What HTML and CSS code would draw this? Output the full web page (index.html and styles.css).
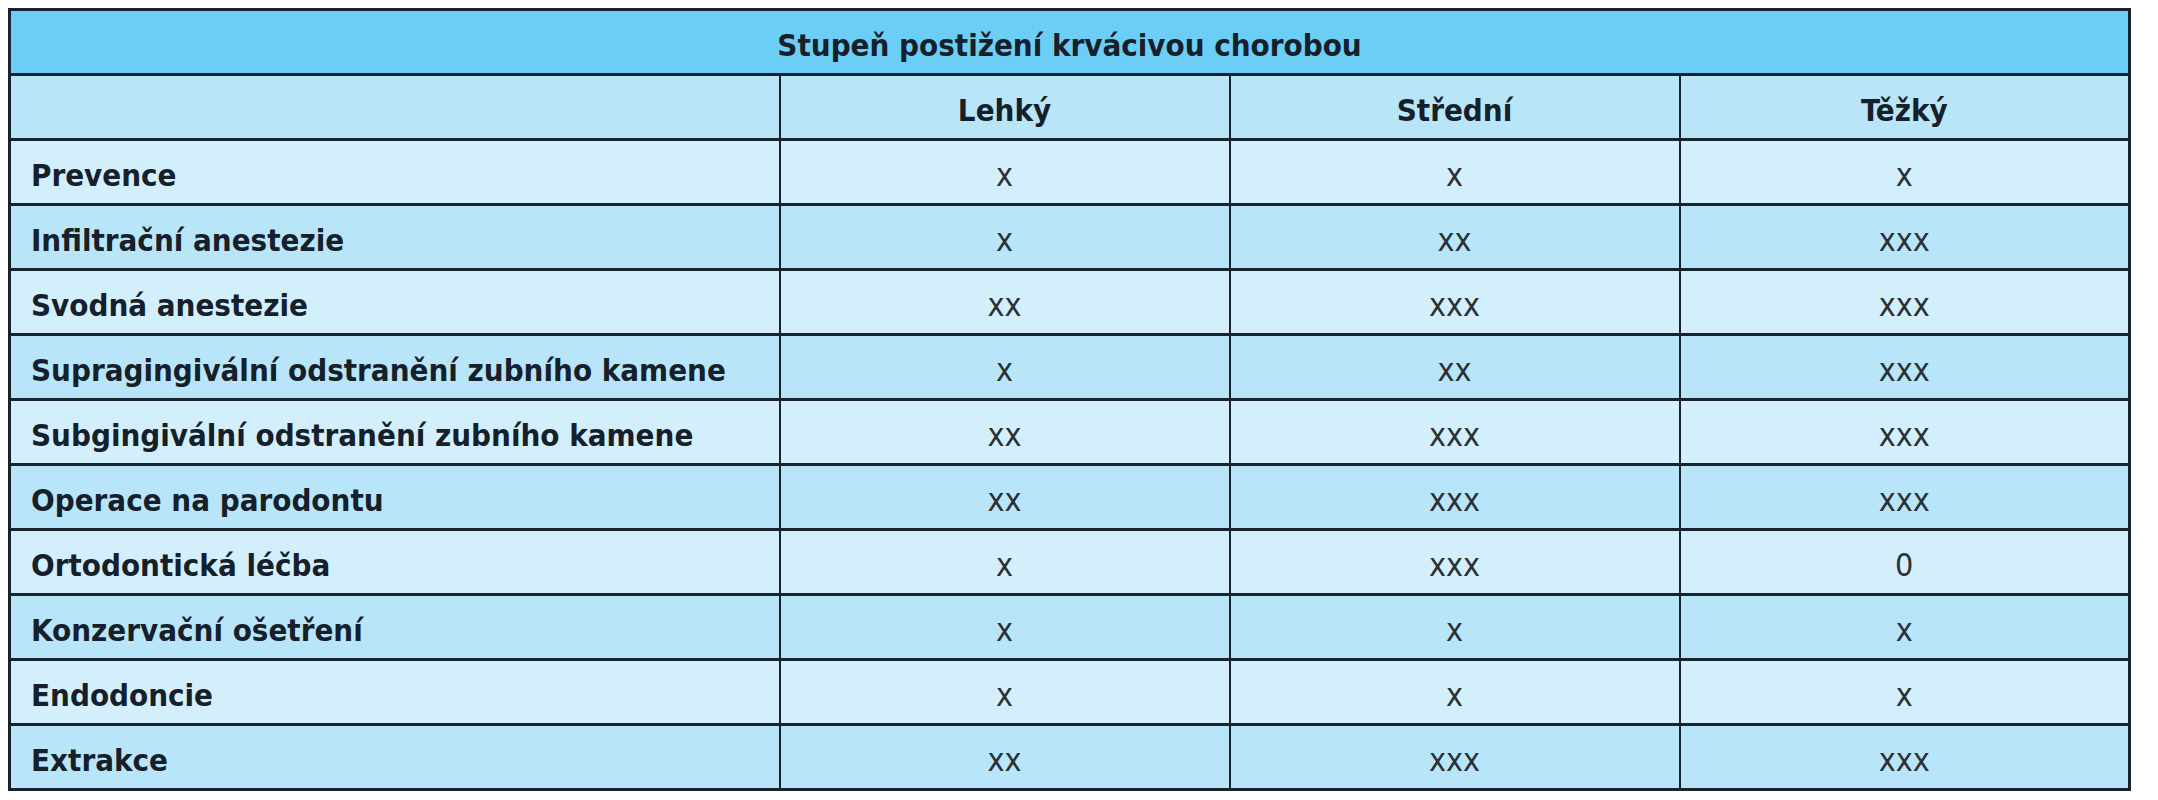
FILE: index.html
```html
<!DOCTYPE html>
<html lang="cs">
<head>
<meta charset="utf-8">
<title>Stupeň postižení krvácivou chorobou</title>
<link rel="stylesheet" href="styles.css">
</head>
<body>
<table class="grid">
  <colgroup>
    <col class="c-label">
    <col class="c-val">
    <col class="c-val">
    <col class="c-val">
  </colgroup>
  <thead>
    <tr class="title-row"><th colspan="4">Stupeň postižení krvácivou chorobou</th></tr>
    <tr class="head-row"><th></th><th>Lehký</th><th>Střední</th><th>Těžký</th></tr>
  </thead>
  <tbody>
    <tr class="light"><th>Prevence</th><td>x</td><td>x</td><td>x</td></tr>
    <tr class="dark"><th>Infiltrační anestezie</th><td>x</td><td>xx</td><td>xxx</td></tr>
    <tr class="light"><th>Svodná anestezie</th><td>xx</td><td>xxx</td><td>xxx</td></tr>
    <tr class="dark"><th>Supragingivální odstranění zubního kamene</th><td>x</td><td>xx</td><td>xxx</td></tr>
    <tr class="light"><th>Subgingivální odstranění zubního kamene</th><td>xx</td><td>xxx</td><td>xxx</td></tr>
    <tr class="dark"><th>Operace na parodontu</th><td>xx</td><td>xxx</td><td>xxx</td></tr>
    <tr class="light"><th>Ortodontická léčba</th><td>x</td><td>xxx</td><td>0</td></tr>
    <tr class="dark"><th>Konzervační ošetření</th><td>x</td><td>x</td><td>x</td></tr>
    <tr class="light"><th>Endodoncie</th><td>x</td><td>x</td><td>x</td></tr>
    <tr class="dark"><th>Extrakce</th><td>xx</td><td>xxx</td><td>xxx</td></tr>
  </tbody>
</table>
</body>
</html>
```

FILE: styles.css
```css
html, body {
  background: #ffffff;
}
body {
  margin: 8px;
  font-family: "DejaVu Sans Condensed", "DejaVu Sans", sans-serif;
  font-stretch: condensed;
  color: #15202b;
}
.grid {
  width: 2120px;
  table-layout: fixed;
  border-collapse: collapse;
  border: 3px solid #18232e;
}
.c-label { width: 770px; }
.c-val { width: 450px; }
.grid th, .grid td {
  border-top: 3px solid #18232e;
  border-bottom: 3px solid #18232e;
  border-left: 2px solid #18232e;
  border-right: 2px solid #18232e;
  height: 65px;
  padding: 6px 0 0 0;
  box-sizing: border-box;
  vertical-align: middle;
  line-height: 1;
}
.grid th {
  font-weight: bold;
  font-size: 31px;
  text-align: center;
  color: #15202b;
}
.grid tbody th {
  text-align: left;
  padding-left: 20px;
}
.grid td {
  font-weight: normal;
  font-size: 32px;
  text-align: center;
  color: #2b3035;
}
.title-row th {
  background: #6dcef5;
  height: 65px;
}
.head-row th {
  background: #b9e5f9;
}
.dark th, .dark td {
  background: #b9e5f9;
}
.light th, .light td {
  background: #d4effc;
}
```
